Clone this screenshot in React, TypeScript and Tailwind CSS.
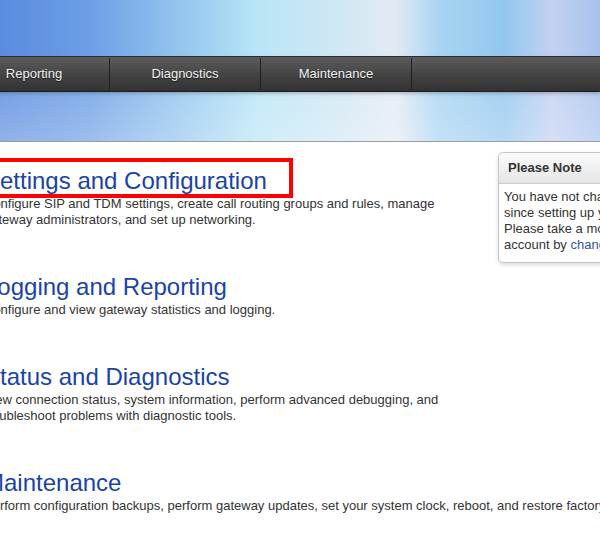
import React from 'react';

const sections = [
  {
    title: 'Settings and Configuration',
    lines: [
      'Configure SIP and TDM settings, create call routing groups and rules, manage gateway administrators, and set up networking.',
    ],
    highlight: true,
  },
  {
    title: 'Logging and Reporting',
    lines: ['Configure and view gateway statistics and logging.'],
  },
  {
    title: 'Status and Diagnostics',
    lines: [
      'View connection status, system information, perform advanced debugging, and troubleshoot problems with diagnostic tools.',
    ],
  },
  {
    title: 'Maintenance',
    lines: [
      'Perform configuration backups, perform gateway updates, set your system clock, reboot, and restore factory defaults.',
    ],
    nowrap: true,
  },
];

const tabs = ['Reporting', 'Diagnostics', 'Maintenance'];

const App: React.FC = () => {
  return (
    <div className="w-full min-h-[539px] overflow-hidden bg-white font-['Liberation_Sans',Arial,sans-serif]">
      {/* banner */}
      <header className="h-[142px] flex flex-col border-b border-[#9c9c9c] bg-[linear-gradient(90deg,#5b8bdf_0%,#6d9fe6_15%,#9ccdf0_33%,#b9e5f7_43%,#cfe7f4_56%,#e3eaf4_66%,#a9d4f1_73%,#93c7ef_84%,#c3d0f1_92%,#a7c2ec_100%)]">
        <div className="h-[56px]" />
        <nav className="h-[36px] flex items-center -ml-[41px] border-t border-[#2c2c2c] border-b border-b-[#1c1c1c] bg-[linear-gradient(180deg,#5c5c5c_0%,#454545_50%,#323232_100%)] shadow-[0_2px_3px_rgba(0,0,0,0.25)]">
          {tabs.map((t) => (
            <div key={t} className="flex items-center h-full">
              <div className="w-[150px] text-center text-[13px] text-[#f2f2f2] [text-shadow:0_1px_1px_rgba(0,0,0,0.6)]">
                {t}
              </div>
              <span className="w-px h-[32px] bg-[#1f1f1f]" />
            </div>
          ))}
          <div className="flex-1" />
        </nav>
        <div className="flex-1 bg-[linear-gradient(180deg,rgba(255,255,255,0.18)_0%,rgba(255,255,255,0.32)_100%)]" />
      </header>

      {/* content */}
      <div className="flex -ml-[16px] pt-[10px]">
        <div className="w-[480px] shrink-0 pt-[13px]">
          {sections.map((s) => (
            <section key={s.title} className="mb-[43px]">
              <div className="relative pt-[2px]">
                <h2 className="text-[24px] leading-[28px] text-[#1a43a6] whitespace-nowrap">{s.title}</h2>
                {s.highlight && (
                  <div className="absolute -left-[14px] -top-[7px] w-[323px] h-[40px] border-4 border-[#ff0000]" />
                )}
              </div>
              <p
                className={`mt-px text-[13px] leading-[16px] text-[#333333] ${
                  s.nowrap ? 'whitespace-nowrap' : ''
                }`}
              >
                {s.lines[0]}
              </p>
            </section>
          ))}
        </div>

        <aside className="ml-[34px] w-[240px] shrink-0 self-start rounded-[5px] border border-[#c6c6c6] bg-white shadow-[0_2px_4px_rgba(0,0,0,0.14)] text-[13px] leading-[16px] text-[#333333]">
          <div className="h-[31px] flex items-center px-[9px] border-b border-[#cccccc] rounded-t-[5px] bg-[linear-gradient(180deg,#fbfbfb_0%,#e5e5e5_100%)] font-bold">
            Please Note
          </div>
          <div className="pt-[5px] pb-[9px] px-[5px] whitespace-nowrap">
            <div>You have not changed your password</div>
            <div>since setting up your gateway.</div>
            <div>Please take a moment to secure your</div>
            <div>
              account by <span className="text-[#34589e]">changing the password</span>.
            </div>
          </div>
        </aside>
      </div>
    </div>
  );
};

export default App;
